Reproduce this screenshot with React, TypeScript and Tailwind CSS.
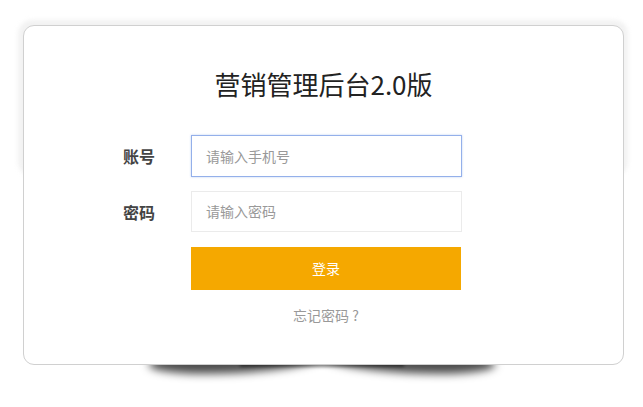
import React from "react";

export default function App() {
  const font = { fontFamily: '"Noto Sans CJK SC", "Noto Sans", sans-serif' };
  return (
    <div className="relative w-[643px] h-[407px] bg-white overflow-hidden" style={font}>
      {/* top soft glow */}
      <div className="absolute left-[18px] top-[20px] w-[610px] h-[156px] rounded-[14px] bg-[#f2f2f2] blur-[2px]" />
      {/* bottom curved shadow */}
      <div className="absolute left-[148px] top-[338px] w-[175px] h-[26px] rounded-[50%] shadow-[0_9px_9px_rgba(0,0,0,0.7)] rotate-[-3deg]" />
      <div className="absolute left-[321px] top-[338px] w-[175px] h-[26px] rounded-[50%] shadow-[0_9px_9px_rgba(0,0,0,0.7)] rotate-[3deg]" />
      <div className="absolute left-[240px] top-[340px] w-[164px] h-[24px] shadow-[0_3px_3px_rgba(0,0,0,0.45)]" />

      <div className="relative z-10 ml-[23px] mt-[25px] w-[601px] h-[340px] box-border border border-[#d0d0d0] rounded-[11px] bg-white">
        <h1 className="mt-[40px] h-[36px] leading-[36px] text-center text-[26px] text-[#222] font-normal">
          营销管理后台2.0版
        </h1>
        <div className="mt-[33px] ml-[99px] flex flex-col">
          <div className="flex items-center">
            <label className="w-[68px] text-[16px] font-bold text-[#444]">账号</label>
            <div className="w-[271px] h-[42px] box-border border border-[#94b0ea] shadow-[0_0_2px_rgba(110,150,230,0.45)] flex items-center pl-[14px] text-[14px] text-[#999] bg-white">
              请输入手机号
            </div>
          </div>
          <div className="flex items-center mt-[14px]">
            <label className="w-[68px] text-[16px] font-bold text-[#444]">密码</label>
            <div className="w-[271px] h-[41px] box-border border border-[#ebebeb] flex items-center pl-[14px] text-[14px] text-[#999] bg-white">
              请输入密码
            </div>
          </div>
          <div className="flex mt-[15px]">
            <div className="w-[68px]" />
            <button className="w-[270px] h-[43px] bg-[#f5a800] text-white text-[14px] flex items-center justify-center">
              登录
            </button>
          </div>
          <div className="flex mt-[15px]">
            <div className="w-[68px]" />
            <div className="w-[270px] text-center text-[14px] leading-[20px] text-[#999]">忘记密码 ?</div>
          </div>
        </div>
      </div>
    </div>
  );
}
